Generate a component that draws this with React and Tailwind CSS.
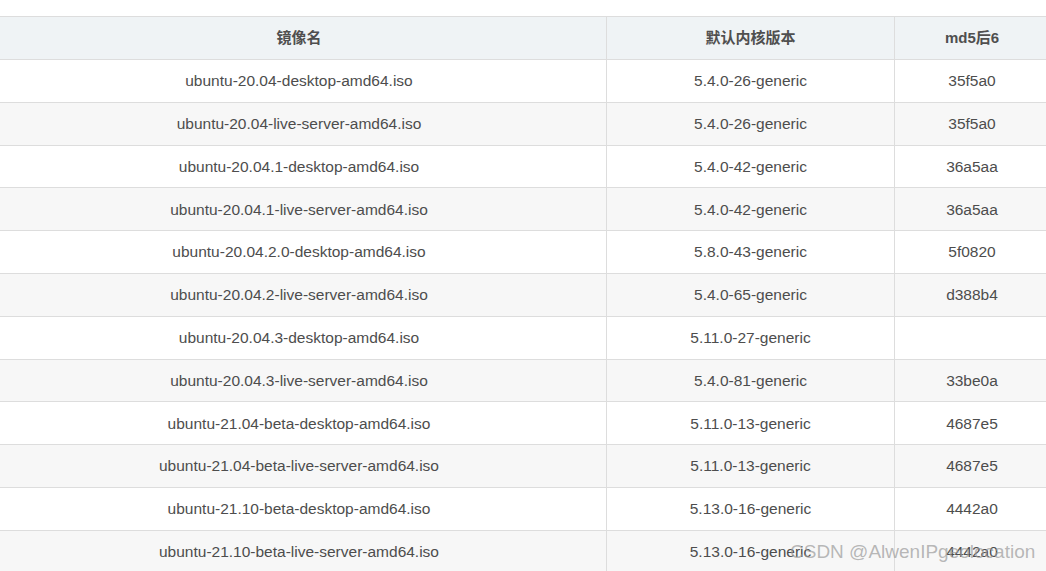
import React from 'react'

const rows = [
  ['ubuntu-20.04-desktop-amd64.iso', '5.4.0-26-generic', '35f5a0'],
  ['ubuntu-20.04-live-server-amd64.iso', '5.4.0-26-generic', '35f5a0'],
  ['ubuntu-20.04.1-desktop-amd64.iso', '5.4.0-42-generic', '36a5aa'],
  ['ubuntu-20.04.1-live-server-amd64.iso', '5.4.0-42-generic', '36a5aa'],
  ['ubuntu-20.04.2.0-desktop-amd64.iso', '5.8.0-43-generic', '5f0820'],
  ['ubuntu-20.04.2-live-server-amd64.iso', '5.4.0-65-generic', 'd388b4'],
  ['ubuntu-20.04.3-desktop-amd64.iso', '5.11.0-27-generic', ''],
  ['ubuntu-20.04.3-live-server-amd64.iso', '5.4.0-81-generic', '33be0a'],
  ['ubuntu-21.04-beta-desktop-amd64.iso', '5.11.0-13-generic', '4687e5'],
  ['ubuntu-21.04-beta-live-server-amd64.iso', '5.11.0-13-generic', '4687e5'],
  ['ubuntu-21.10-beta-desktop-amd64.iso', '5.13.0-16-generic', '4442a0'],
  ['ubuntu-21.10-beta-live-server-amd64.iso', '5.13.0-16-generic', '4442a0'],
]

function App() {
  return (
    <div className="relative w-[1046px] h-[571px] overflow-hidden bg-white pt-4" style={{ fontFamily: '"Liberation Sans", "Noto Sans CJK SC", Arial, sans-serif' }}>
      {/* Table */}
      <table className="-ml-[9px] w-[1058px] border-collapse table-fixed text-[15.5px] text-[#4d4d4d]">
        <colgroup>
          <col className="w-[615px]" />
          <col className="w-[288px]" />
          <col className="w-[155px]" />
        </colgroup>
        <thead>
          <tr className="h-[43px] bg-[#eff3f5]">
            <th className="border border-[#dddddd] font-bold text-[15px] text-[#4f4f4f] text-center">镜像名</th>
            <th className="border border-[#dddddd] font-bold text-[15px] text-[#4f4f4f] text-center">默认内核版本</th>
            <th className="border border-[#dddddd] font-bold text-[15px] text-[#4f4f4f] text-center">md5后6</th>
          </tr>
        </thead>
        <tbody>
          {rows.map((r, i) => (
            <tr key={i} className={`h-[42.8px] ${i % 2 === 1 ? 'bg-[#f7f7f7]' : 'bg-white'}`}>
              <td className="border border-[#dddddd] text-center">{r[0]}</td>
              <td className="border border-[#dddddd] text-center">{r[1]}</td>
              <td className="border border-[#dddddd] text-center">{r[2]}</td>
            </tr>
          ))}
        </tbody>
      </table>

      {/* Watermark */}
      <div className="absolute left-[790px] top-[538px] text-[19px] text-[#9a9a9a]/70 whitespace-nowrap">CSDN @AlwenIPgeolocation</div>
    </div>
  )
}

export default App
